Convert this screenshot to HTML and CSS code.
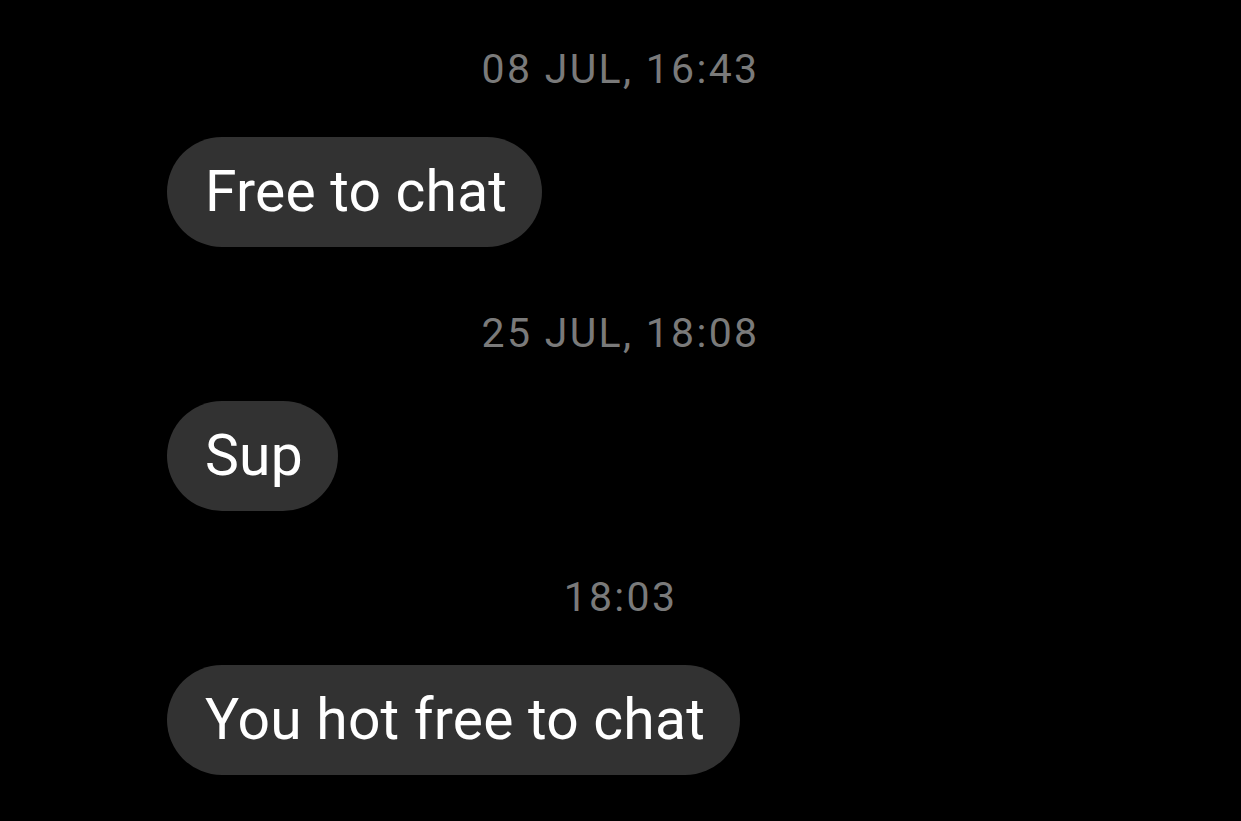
FILE: index.html
```html
<!DOCTYPE html>
<html lang="en">
<head>
    <meta charset="UTF-8">
    <meta name="viewport" content="width=device-width, initial-scale=1.0">
    <title>Messages</title>
    <link rel="stylesheet" href="styles.css">
</head>
<body>
    <div class="thread">
        <!-- first message -->
        <div class="group">
            <div class="stamp">08 JUL, 16:43</div>
            <div class="bubble">Free to chat</div>
        </div>

        <div class="group">
            <div class="stamp">25 JUL, 18:08</div>
            <div class="bubble">Sup</div>
        </div>

        <div class="group">
            <div class="stamp">18:03</div>
            <div class="bubble">You hot free to chat</div>
        </div>
    </div>
</body>
</html>
```

FILE: styles.css
```css
html, body {
    margin: 0;
    padding: 0;
    background-color: #000;
    height: 100%;
}
body {
    font-family: Roboto, "Liberation Sans", sans-serif;
    color: #fff;
    overflow: hidden;
}
.thread {
    padding: 45px 0 0 167px;
    display: flex;
    flex-direction: column;
    gap: 62px;
}
.group {
    display: flex;
    flex-direction: column;
    align-items: flex-start;
}
.stamp {
    align-self: stretch;
    margin-left: -167px;
    text-align: center;
    font-size: 41px;
    letter-spacing: 2.3px;
    line-height: 48px;
    color: #7a7a7a;
    margin-bottom: 44px;
}
.bubble {
    background-color: #323232;
    border-radius: 55px;
    padding: 22px 35px 22px 38px;
    font-size: 57px;
    letter-spacing: 0.2px;
    line-height: 66px;
}
```
